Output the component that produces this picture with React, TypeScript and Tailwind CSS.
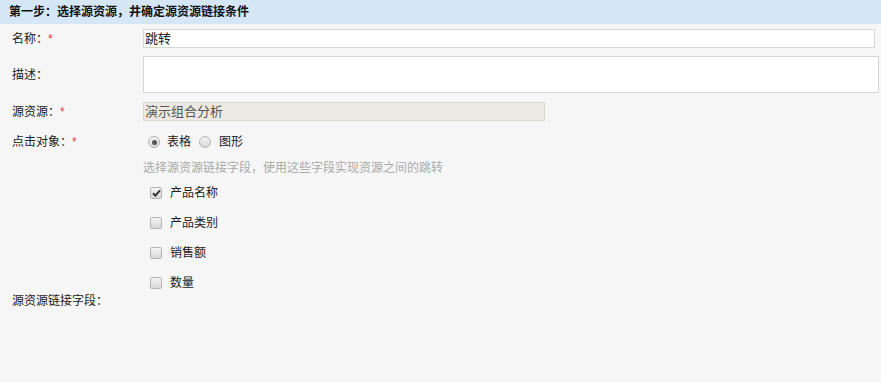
import * as React from "react";

const font = { fontFamily: '"Liberation Sans", "Noto Sans CJK SC", sans-serif' };

function Req() {
  return <span className="text-[#e4393c]">*</span>;
}

function Radio({ checked }: { checked?: boolean }) {
  return (
    <span className="flex h-[12px] w-[12px] items-center justify-center rounded-full border border-[#b4b4b4] bg-gradient-to-b from-[#f4f4f4] to-[#d8d8d8]">
      {checked && <span className="h-[5px] w-[5px] rounded-full bg-[#555]" />}
    </span>
  );
}

function Check({ checked }: { checked?: boolean }) {
  return (
    <span className="flex h-[12px] w-[12px] items-center justify-center rounded-[2px] border border-[#b4b4b4] bg-gradient-to-b from-[#f4f4f4] to-[#d8d8d8]">
      {checked && (
        <svg width="9" height="8" viewBox="0 0 9 8">
          <path d="M1 4.2 L3.4 6.6 L8 1.4" stroke="#333" strokeWidth="2" fill="none" />
        </svg>
      )}
    </span>
  );
}

const fields = [
  { name: "产品名称", checked: true },
  { name: "产品类别" },
  { name: "销售额" },
  { name: "数量" },
];

export default function App() {
  const [target, setTarget] = React.useState("table");

  return (
    <div className="h-[382px] w-[881px] overflow-hidden bg-[#f6f6f6] text-[12px] text-[#222]" style={font}>
      <div className="h-[24px] bg-[#d5e6f6] pl-[9px] text-[12px] font-bold leading-[24px] text-[#111]">
        第一步：选择源资源，井确定源资源链接条件
      </div>

      <div className="grid grid-cols-[143px_1fr]">
        <div className="mt-[5px] flex h-[19px] items-center pl-[12px]">
          名称：<Req />
        </div>
        <div className="mt-[5px]">
          <div className="flex h-[19px] w-[732px] items-center border border-[#d6d6d6] bg-white px-[1px] text-[13px]">
            跳转
          </div>
        </div>

        <div className="mt-[8px] flex h-[37px] items-center pl-[12px]">描述：</div>
        <div className="mt-[8px]">
          <div className="h-[37px] w-[736px] border border-[#d6d6d6] bg-white" />
        </div>

        <div className="mt-[9px] flex h-[19px] items-center pl-[12px]">
          源资源：<Req />
        </div>
        <div className="mt-[9px]">
          <div className="flex h-[19px] w-[402px] items-center border border-[#d8d8d0] bg-[#ebe9e1] px-[1px] text-[13px] text-[#555]">
            演示组合分析
          </div>
        </div>

        <div className="mt-[11px] flex h-[20px] items-center pl-[12px]">
          点击对象：<Req />
        </div>
        <div className="mt-[11px] flex h-[20px] items-center pl-[5px]">
          <label className="flex items-center" onClick={() => setTarget("table")}>
            <Radio checked={target === "table"} />
            <span className="ml-[7px]">表格</span>
          </label>
          <label className="ml-[8px] flex items-center" onClick={() => setTarget("chart")}>
            <Radio checked={target === "chart"} />
            <span className="ml-[8px]">图形</span>
          </label>
        </div>

        <div />
        <div className="mt-[8px] h-[16px] leading-[16px] text-[#aaa]">
          选择源资源链接字段，使用这些字段实现资源之间的跳转
        </div>

        <div className="self-end pl-[12px] leading-[14px]">源资源链接字段：</div>
        <div className="mt-[2px] flex flex-col pb-[10px] pl-[7px]">
          {fields.map((f) => (
            <div key={f.name} className="flex h-[30px] items-center">
              <Check checked={f.checked} />
              <span className="ml-[8px]">{f.name}</span>
            </div>
          ))}
        </div>
      </div>
    </div>
  );
}
